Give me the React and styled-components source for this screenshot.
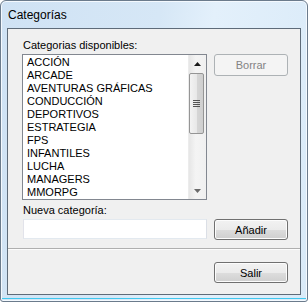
import React from 'react'
import styled, { createGlobalStyle } from 'styled-components'

const GlobalStyle = createGlobalStyle`
  html, body {
    margin: 0;
    padding: 0;
    background: #ffffff;
  }
  body {
    font-family: "Liberation Sans", Arial, sans-serif;
    font-size: 11px;
    color: #000;
  }
`

const Window = styled.div`
  box-sizing: border-box;
  width: 308px;
  height: 302px;
  border: 1px solid #6b7b8c;
  border-radius: 6px 6px 3px 3px;
  background: linear-gradient(100deg, #cfe2f4 0%, #d6e7f6 45%, #e3f0fb 60%, #d9eaf8 100%);
  box-shadow: inset 0 0 0 1px #f4f9fe;
  display: flex;
  flex-direction: column;
  position: relative;
  overflow: hidden;
`

const TitleBar = styled.div`
  height: 27px;
  display: flex;
  align-items: center;
  padding-left: 7px;
  font-size: 12px;
  color: #000;
  padding-top: 1px;
  box-sizing: border-box;
`

const Client = styled.div`
  margin: 0 6px 0 6px;
  border: 1px solid #5e6b79;
  background: #f0f0f0;
  height: 265px;
  display: flex;
  flex-direction: column;
`

const BottomGlow = styled.div`
  flex: 1;
  border-bottom: 1px solid #40c8ef;
  margin: 0 1px 2px;
`

const Main = styled.div`
  padding: 10px 12px 0 14px;
  display: flex;
  flex-direction: column;
`

const Label = styled.div`
  height: ${p => p.$h || 15}px;
  line-height: 13px;
  padding-left: 1px;
  margin-top: ${p => p.$mt || 0}px;
`

const Row = styled.div`
  display: flex;
  align-items: flex-start;
  gap: 7px;
`

const ListBox = styled.div`
  box-sizing: border-box;
  width: 185px;
  height: 146px;
  border: 1px solid #828790;
  background: #fff;
  display: flex;
`

const Items = styled.ul`
  flex: 1;
  list-style: none;
  margin: 0;
  padding: 1px 0 0 4px;
`

const Item = styled.li`
  height: 13px;
  line-height: 13px;
  white-space: nowrap;
`

const ScrollBar = styled.div`
  width: 17px;
  background: linear-gradient(90deg, #e6e6e6, #f4f4f4 40%, #f0f0f0);
  border-left: 1px solid #ececec;
  display: flex;
  flex-direction: column;
  align-items: center;
`

const Arrow = styled.div`
  height: 17px;
  width: 17px;
  display: flex;
  align-items: center;
  justify-content: center;
`

const Track = styled.div`
  flex: 1;
  width: 100%;
  padding-top: 1px;
  box-sizing: border-box;
`

const Thumb = styled.div`
  box-sizing: border-box;
  margin-left: 0;
  width: 15px;
  height: 61px;
  border: 1px solid #959595;
  border-radius: 2px;
  background: linear-gradient(90deg, #f3f3f3 0%, #e8e8e8 50%, #d6d6d6 51%, #cfcfcf 100%);
  display: flex;
  align-items: center;
  justify-content: center;
`

const Button = styled.button`
  box-sizing: border-box;
  width: 74px;
  height: ${p => p.$h || 21}px;
  margin: 0;
  padding: 0;
  font-family: "Liberation Sans", Arial, sans-serif;
  font-size: 11px;
  border-radius: 3px;
  border: 1px solid ${p => (p.disabled ? '#adb2b5' : '#707070')};
  color: ${p => (p.disabled ? '#838383' : '#000')};
  background: ${p =>
    p.disabled
      ? '#f4f4f4'
      : 'linear-gradient(180deg, #f2f2f2 0%, #ebebeb 50%, #dddddd 51%, #cfcfcf 100%)'};
  box-shadow: inset 0 0 0 1px ${p => (p.disabled ? '#f4f4f4' : '#fcfcfc')};
`

const TextInput = styled.input`
  box-sizing: border-box;
  width: 184px;
  height: 20px;
  margin: 0 0 0 1px;
  border: 1px solid #abadb3;
  border-top-color: #e3e9ef;
  border-left-color: #e2e3ea;
  border-right-color: #dbdfe6;
  border-bottom-color: #e3e9ef;
  background: #fff;
  outline: none;
`

const Separator = styled.div`
  margin-top: 8px;
  border-top: 1px solid #a0a0a0;
  border-bottom: 1px solid #ffffff;
  opacity: 0.8;
`

const Footer = styled.div`
  display: flex;
  justify-content: flex-end;
  padding: 12px 12px 0 0;
`

const categories = [
  'ACCIÓN',
  'ARCADE',
  'AVENTURAS GRÁFICAS',
  'CONDUCCIÓN',
  'DEPORTIVOS',
  'ESTRATEGIA',
  'FPS',
  'INFANTILES',
  'LUCHA',
  'MANAGERS',
  'MMORPG'
]

const Grip = () => (
  <svg width="7" height="7" viewBox="0 0 7 7">
    <path d="M0 0.5h7M0 2.5h7M0 4.5h7M0 6.5h7" stroke="#555" strokeWidth="1" />
  </svg>
)

const Tri = ({ down }) => (
  <svg width="7" height="4" viewBox="0 0 7 4">
    <path d={down ? 'M0 0h7L3.5 4z' : 'M0 4h7L3.5 0z'} fill={down ? '#6a6a6a' : '#1a1a1a'} />
  </svg>
)

const App = () => (
  <>
    <GlobalStyle />
    <Window>
      <TitleBar>Categorías</TitleBar>
      <Client>
        <Main>
          <Label>Categorias disponibles:</Label>
          <Row>
            <ListBox>
              <Items>
                {categories.map(c => (
                  <Item key={c}>{c}</Item>
                ))}
              </Items>
              <ScrollBar>
                <Arrow><Tri /></Arrow>
                <Track>
                  <Thumb><Grip /></Thumb>
                </Track>
                <Arrow><Tri down /></Arrow>
              </ScrollBar>
            </ListBox>
            <Button disabled $h={22}>Borrar</Button>
          </Row>
          <Label $mt={4}>Nueva categoría:</Label>
          <Row>
            <TextInput />
            <Button>Añadir</Button>
          </Row>
        </Main>
        <Separator />
        <Footer>
          <Button>Salir</Button>
        </Footer>
      </Client>
      <BottomGlow />
    </Window>
  </>
)

export default App
